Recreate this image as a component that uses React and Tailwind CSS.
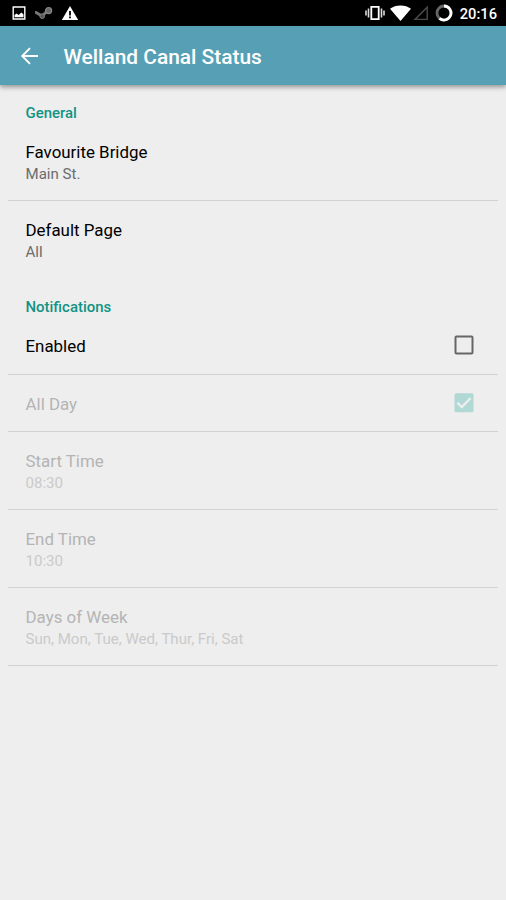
import React from 'react';

const StatusBar = () => (
  <div className="flex h-[26px] items-center justify-between bg-black pr-[9px] pl-3 text-white">
    <div className="flex items-center">
      <svg className="h-[14px] w-[14px]" viewBox="0 0 14 14">
        <path d="M1.2 1h11.6v12H1.2z" fill="none" stroke="#fff" strokeWidth="1.4" />
        <path d="M2.5 11.2V9l2-1.5 2 1.5 3-2.5 2 2v2.7z" fill="#fff" />
      </svg>
      <svg className="ml-[9px] h-[14px] w-[18px]" viewBox="0 0 18 14">
        <path d="M1 6.5l6 3.5 6-5.5" fill="none" stroke="#777" strokeWidth="3" strokeLinecap="round" />
        <circle cx="7.2" cy="10.2" r="2.3" fill="#555" stroke="#808080" strokeWidth="1" />
        <circle cx="13.6" cy="4.6" r="3" fill="#666" stroke="#858585" strokeWidth="1.3" />
      </svg>
      <svg className="ml-2 h-[16px] w-[18px]" viewBox="0 0 18 16">
        <path d="M9 1l8.2 14H.8z" fill="#fff" />
        <path d="M8.1 6h1.8v4.4H8.1zM8.1 11.6h1.8v1.7H8.1z" fill="#000" />
      </svg>
    </div>
    <div className="flex items-center">
      <svg className="h-[16px] w-[20px]" viewBox="0 0 20 16">
        <path d="M6.3 1.8h7.4v12.4H6.3z" fill="none" stroke="#fff" strokeWidth="1.8" />
        <path d="M3.5 3.5v9M16.5 3.5v9M1 5.5v5M19 5.5v5" stroke="#ddd" strokeWidth="1.6" />
      </svg>
      <svg className="ml-[5px] h-[16px] w-[21px]" viewBox="0 0 21 16">
        <path d="M0 3.8C2.8 1.6 6.4.4 10.5.4S18.2 1.6 21 3.8L10.5 16z" fill="#fff" />
      </svg>
      <svg className="ml-[2px] h-[16px] w-[16px]" viewBox="0 0 16 16">
        <path d="M14.2 2.2v12.2H2z" fill="none" stroke="#4a4a4a" strokeWidth="1.4" />
      </svg>
      <svg className="ml-[6px] h-[18px] w-[18px]" viewBox="0 0 18 18">
        <circle cx="9" cy="9" r="7" fill="none" stroke="#666" strokeWidth="2.8" />
        <path d="M9 2a7 7 0 1 1-4.5 12.4" fill="none" stroke="#fff" strokeWidth="2.8" />
      </svg>
      <span className="ml-[7px] pt-[2px] text-[14.7px] leading-none font-medium">20:16</span>
    </div>
  </div>
);

const AppBar = () => (
  <header className="relative flex h-[59px] items-center bg-[#569fb4] pl-[20px] text-white shadow-[0_2px_5px_rgba(0,0,0,0.4)]">
    <svg className="h-[20px] w-[20px]" viewBox="0 0 20 20" fill="none" stroke="#fff" strokeWidth="1.9">
      <path d="M18 10H2.8M10 2.2L2.2 10l7.8 7.8" />
    </svg>
    <h1 className="ml-[23.5px] pt-[3px] text-[20.9px] leading-none font-medium">Welland Canal Status</h1>
  </header>
);

const Checkbox = ({ checked }) => (
  <svg className="h-[20px] w-[20px]" viewBox="0 0 20 20">
    {checked ? (
      <>
        <rect x="0.5" y="0.2" width="19" height="19" rx="1.5" fill="#b0d8d4" />
        <path d="M3.4 9.7l4.4 4.4 8.8-9" fill="none" stroke="#eee" strokeWidth="2.2" />
      </>
    ) : (
      <rect x="1.5" y="1.5" width="17" height="17" rx="1" fill="none" stroke="#666" strokeWidth="2" />
    )}
  </svg>
);

const Preference = ({ title, summary, disabled }) => (
  <div className="h-[78px] pt-[18px] pl-[17.5px]">
    <p className={`text-[16.9px] leading-[22px] ${disabled ? 'text-[#b4b4b4]' : 'text-black'}`}>{title}</p>
    <p className={`text-[15.05px] leading-[22px] ${disabled ? 'text-[#cacaca]' : 'text-[#6c6c6c]'}`}>{summary}</p>
  </div>
);

const CheckPreference = ({ title, checked, disabled }) => (
  <div className="flex items-start justify-between pt-[18px] pr-[24px] pb-[17px] pl-[17.5px]">
    <p className={`text-[16.9px] leading-[22px] ${disabled ? 'text-[#b4b4b4]' : 'text-black'}`}>{title}</p>
    <Checkbox checked={checked} />
  </div>
);

const Category = ({ children }) => (
  <h2 className="pl-[17.5px] text-[14.95px] leading-[20px] font-medium text-[#129384]">{children}</h2>
);

const Divider = () => <hr className="-mt-px border-t border-[#d2d2d2]" />;

const App = () => (
  <div className="min-h-[900px] w-full bg-[#eee] font-['Roboto',sans-serif]">
    <StatusBar />
    <AppBar />
    <main className="px-2 pt-[18px]">
      <Category>General</Category>
      <Preference title="Favourite Bridge" summary="Main St." />
      <Divider />
      <Preference title="Default Page" summary="All" />
      <div className="pt-[18px]">
        <Category>Notifications</Category>
      </div>
      <CheckPreference title="Enabled" checked={false} />
      <div className="pt-px">
        <Divider />
      </div>
      <CheckPreference title="All Day" checked disabled />
      <Divider />
      <Preference title="Start Time" summary="08:30" disabled />
      <Divider />
      <Preference title="End Time" summary="10:30" disabled />
      <Divider />
      <Preference title="Days of Week" summary="Sun, Mon, Tue, Wed, Thur, Fri, Sat" disabled />
      <Divider />
    </main>
  </div>
);

export default App;
